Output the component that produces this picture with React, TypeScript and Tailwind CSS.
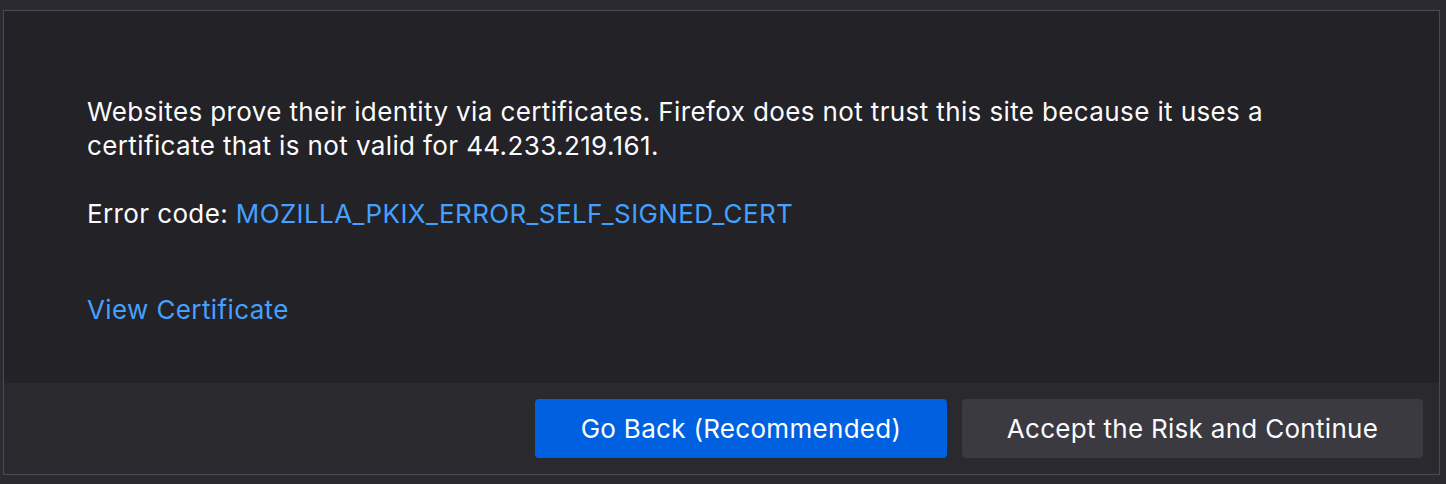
export default function App() {
    return (
        <div className="h-[484px] w-full overflow-hidden bg-[#2b2a30] pt-[10px] pl-[3px] font-['Inter',sans-serif] text-[#fbfbfe]">
            <div className="flex h-[465px] w-[1437px] flex-col border border-[#4b4a50] bg-[#232226]">
                <div className="flex-1 pt-[84px] pl-[83px] text-[26px] leading-[34px] tracking-[0.38px]">
                    <p>
                        Websites prove their identity via certificates. Firefox does not trust this site because it uses a
                        <br />
                        certificate that is not valid for 44.233.219.161.
                    </p>
                    <p className="mt-[34px]">
                        Error code: <a className="text-[#45a1ff]">MOZILLA_PKIX_ERROR_SELF_SIGNED_CERT</a>
                    </p>
                    <p className="mt-[62px]">
                        <a className="text-[#45a1ff]">View Certificate</a>
                    </p>
                </div>
                <div className="flex h-[91px] items-start justify-end gap-[15px] bg-[#2a2a2e] pt-[16px] pr-[16px] text-[26px] tracking-[0.3px]">
                    <button className="h-[59px] w-[412px] rounded-[4px] bg-[#0061e0] text-white">
                        Go Back (Recommended)
                    </button>
                    <button className="h-[59px] w-[461px] rounded-[4px] bg-[#3b3a40] text-[#fbfbfe]">
                        Accept the Risk and Continue
                    </button>
                </div>
            </div>
        </div>
    );
}
